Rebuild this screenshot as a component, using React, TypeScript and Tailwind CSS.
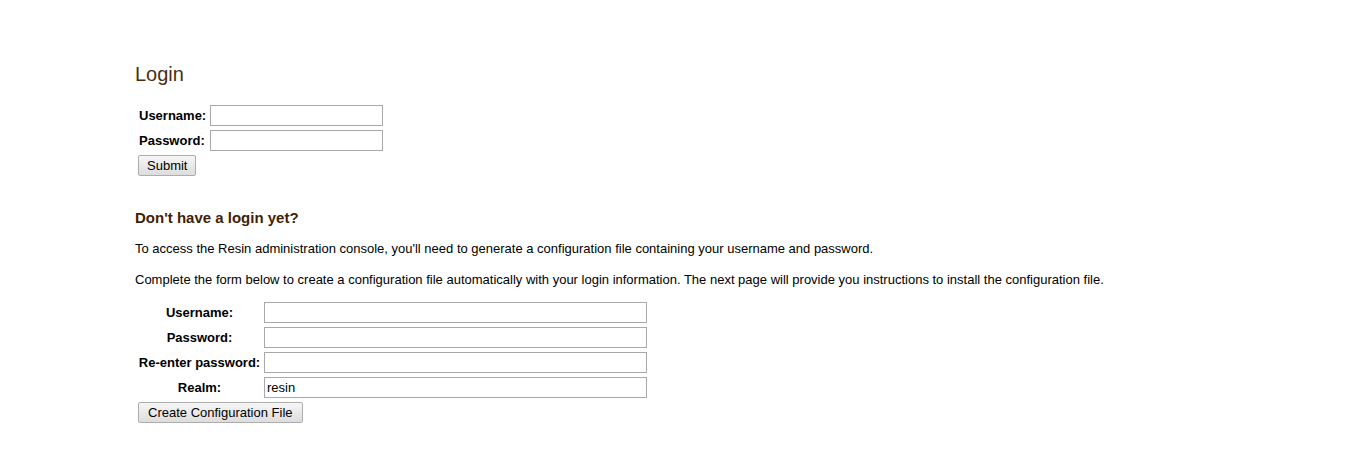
import React from "react";

const inputCls =
  "h-[21px] border border-[#a9a9a9] bg-white px-[2px] text-[13px] text-black outline-none";

const btnCls =
  "h-[21px] rounded-[2px] border border-[#adadad] bg-gradient-to-b from-[#f6f6f6] to-[#dddddd] text-[13px] leading-none text-black";

const signupRows = [
  { label: "Username:", value: "" },
  { label: "Password:", value: "" },
  { label: "Re-enter password:", value: "" },
  { label: "Realm:", value: "resin" },
];

export default function App() {
  return (
    <div className="min-h-[454px] w-full bg-white font-['Liberation_Sans',Arial,sans-serif] text-black">
      <div className="pl-[135px] pt-[63px]">
        <h1 className="text-[20px] leading-[23px] font-normal text-[#4a2e14]">Login</h1>

        {/* login form */}
        <div className="mt-[19px] ml-[3px] grid w-max grid-cols-[69px_173px] gap-x-[3px] gap-y-[4px]">
          <label className="flex items-center pl-[1px] text-[13px] font-bold">Username:</label>
          <input className={inputCls} type="text" />
          <label className="flex items-center pl-[1px] text-[13px] font-bold">Password:</label>
          <input className={inputCls} type="password" />
          <div className="col-span-2 flex">
            <button className={btnCls + " px-[8px]"}>Submit</button>
          </div>
        </div>

        <h2 className="mt-[33px] text-[15px] leading-[18px] font-bold text-[#3f1f06]">
          Don't have a login yet?
        </h2>
        <p className="mt-[15px] text-[13px] leading-[14px]">
          To access the Resin administration console, you'll need to generate a configuration file
          containing your username and password.
        </p>
        <p className="mt-[17px] text-[13px] leading-[14px]">
          Complete the form below to create a configuration file automatically with your login
          information. The next page will provide you instructions to install the configuration file.
        </p>

        {/* config form */}
        <div className="mt-[15px] ml-[3px] grid w-max grid-cols-[123px_383px] gap-x-[3px] gap-y-[4px]">
          {signupRows.map((r) => (
            <React.Fragment key={r.label}>
              <label className="flex items-center justify-center text-[13px] font-bold">{r.label}</label>
              <input
                className={inputCls}
                type={r.label.includes("assword") ? "password" : "text"}
                defaultValue={r.value}
              />
            </React.Fragment>
          ))}
          <div className="col-span-2 flex">
            <button className={btnCls + " px-[9px]"}>Create Configuration File</button>
          </div>
        </div>
      </div>
    </div>
  );
}
